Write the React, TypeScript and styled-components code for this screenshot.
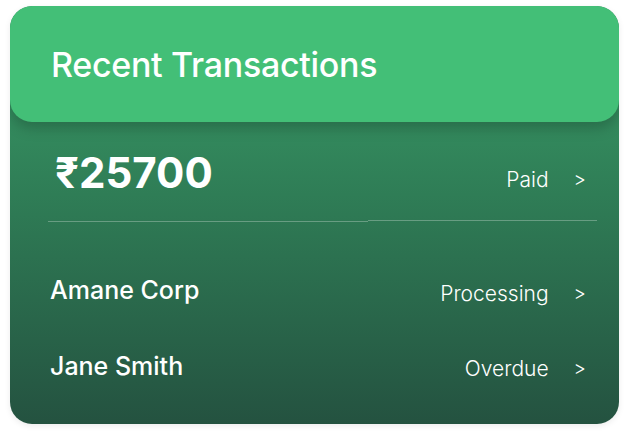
import React from 'react';
import styled, { createGlobalStyle } from 'styled-components';

const GlobalStyle = createGlobalStyle`
  html, body {
    margin: 0;
    padding: 0;
    background: #ffffff;
    font-family: Inter, "Noto Sans", sans-serif;
  }
`;

const Page = styled.div`
  padding: 6px 13px 16px 10px;
`;

const Card = styled.div`
  width: 609px;
  height: 418px;
  border-radius: 22px;
  overflow: hidden;
  background: linear-gradient(180deg, #3a9f69 0%, #2f7d56 45%, #245240 100%);
  display: flex;
  flex-direction: column;
  box-shadow: 0 2px 6px rgba(0, 0, 0, 0.08);
`;

const Header = styled.div`
  height: 116px;
  flex-shrink: 0;
  background: #43bf77;
  border-radius: 22px;
  box-shadow: 0 6px 14px rgba(0, 0, 0, 0.22);
  display: flex;
  align-items: center;
  padding-left: 41px;
  position: relative;
  z-index: 1;
`;

const Title = styled.h2`
  margin: 0;
  color: #ffffff;
  font-size: 34px;
  font-weight: 500;
  letter-spacing: -0.3px;
`;

const Body = styled.div`
  padding: 0 22px 0 38px;
  display: flex;
  flex-direction: column;
`;

const SummaryRow = styled.div`
  display: flex;
  align-items: stretch;
  height: 100px;
`;

const Half = styled.div<{ $grow: number; $shift?: number }>`
  flex: ${p => p.$grow};
  display: flex;
  align-items: center;
  justify-content: ${p => (p.$shift ? 'flex-end' : 'flex-start')};
  border-bottom: 1px solid rgba(255, 255, 255, 0.28);
  margin-bottom: ${p => p.$shift ?? 0}px;
`;

const Amount = styled.div`
  color: #ffffff;
  font-size: 42px;
  font-weight: 700;
  padding-left: 7px;
  margin-top: 2px;
`;

const Status = styled.div<{ $top?: number }>`
  display: flex;
  align-items: center;
  color: #ffffff;
  font-size: 21px;
  font-weight: 300;
  padding-right: 11px;
  margin-top: ${p => p.$top ?? 0}px;
`;

const Chevron = styled.span`
  margin-left: 25px;
  font-size: 19px;
`;

const List = styled.div`
  display: flex;
  flex-direction: column;
  padding-top: 51px;
  gap: 42px;
`;

const Row = styled.div`
  display: flex;
  align-items: center;
  justify-content: space-between;
  padding-left: 2px;
  height: 34px;
`;

const Name = styled.div`
  color: #ffffff;
  font-size: 25px;
  font-weight: 500;
`;

const rows = [
  { name: 'Amane Corp', status: 'Processing', top: 6 },
  { name: 'Jane Smith', status: 'Overdue', top: 4 },
];

export default function App() {
  return (
    <>
      <GlobalStyle />
      <Page>
        <Card>
          <Header>
            <Title>Recent Transactions</Title>
          </Header>
          <Body>
            <SummaryRow>
              <Half $grow={320}>
                <Amount>₹25700</Amount>
              </Half>
              <Half $grow={229} $shift={1}>
                <Status $top={16}>
                  Paid<Chevron>&gt;</Chevron>
                </Status>
              </Half>
            </SummaryRow>
            <List>
              {rows.map(r => (
                <Row key={r.name}>
                  <Name>{r.name}</Name>
                  <Status $top={r.top}>
                    {r.status}
                    <Chevron>&gt;</Chevron>
                  </Status>
                </Row>
              ))}
            </List>
          </Body>
        </Card>
      </Page>
    </>
  );
}
